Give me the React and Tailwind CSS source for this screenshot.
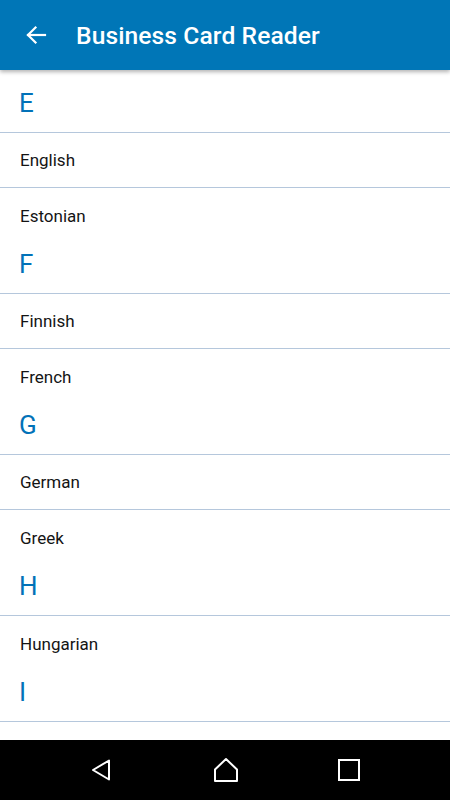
import React from 'react';

const SECTIONS = [
  { letter: 'E', items: ['English', 'Estonian'] },
  { letter: 'F', items: ['Finnish', 'French'] },
  { letter: 'G', items: ['German', 'Greek'] },
  { letter: 'H', items: ['Hungarian'] },
  { letter: 'I', items: [] },
];

function BackArrow() {
  return (
    <svg width="24" height="24" viewBox="0 0 24 24" fill="none" stroke="white" strokeWidth="2.2" strokeLinecap="square">
      <path d="M21 12H4" />
      <path d="M11.5 4.5 4 12l7.5 7.5" />
    </svg>
  );
}

export default function App() {
  return (
    <div className="w-[450px] h-[800px] flex flex-col bg-white overflow-hidden" style={{ fontFamily: 'Roboto, "Noto Sans", sans-serif' }}>
      {/* App bar */}
      <div className="relative z-10 h-[70px] shrink-0 flex items-center bg-[#0076b7] shadow-[0_2px_4px_rgba(0,0,0,0.3)]">
        <div className="w-[70px] flex justify-center pl-[1px]">
          <BackArrow />
        </div>
        <h1 className="text-white text-[24.6px] font-medium tracking-[0.1px] ml-[6px] pt-[2px]">Business Card Reader</h1>
      </div>

      {/* List */}
      <div className="flex-1 overflow-hidden pt-[12px]">
        {SECTIONS.map((section) => (
          <div key={section.letter}>
            <div className="h-[51px] pl-[19px] border-b border-[#b5c7dc] text-[#0272b8] text-[26px] leading-[42px]">
              {section.letter}
            </div>
            {section.items.map((item, i) => (
              <div
                key={item}
                className={`h-[55px] pl-5 pt-[2px] flex items-center text-[17px] text-[#141414] ${
                  i < section.items.length - 1 ? 'border-b border-[#b5c7dc]' : ''
                }`}
              >
                {item}
              </div>
            ))}
          </div>
        ))}
      </div>

      {/* Nav bar */}
      <div className="h-[60px] shrink-0 bg-black flex items-center justify-around px-[40px]">
        <svg width="26" height="26" viewBox="0 0 26 26" fill="none" stroke="white" strokeWidth="2" strokeLinejoin="round">
          <path d="M20 3.5v19L4 13z" />
        </svg>
        <svg width="26" height="26" viewBox="0 0 26 26" fill="none" stroke="white" strokeWidth="2" strokeLinejoin="round">
          <path d="M2 12.5 13 2l11 10.5V24H2z" />
        </svg>
        <svg width="24" height="24" viewBox="0 0 24 24" fill="none" stroke="white" strokeWidth="2">
          <rect x="2" y="2" width="20" height="20" />
        </svg>
      </div>
    </div>
  );
}
